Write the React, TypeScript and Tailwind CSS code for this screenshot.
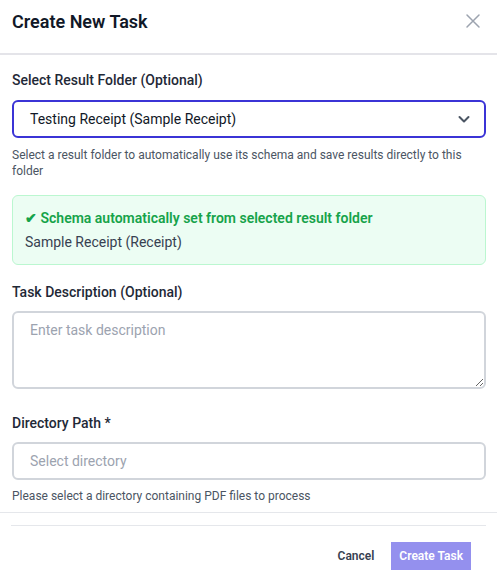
import React from "react";

export default function App() {
  return (
    <div className="w-[497px] h-[585px] bg-white overflow-hidden" style={{ fontFamily: "Roboto, 'Liberation Sans', sans-serif" }}>
      <div className="flex items-start justify-between px-3 pt-[10px] h-[55px] border-b-2 border-[#e4e4e9]">
        <h2 className="text-[18px] leading-6 font-semibold text-[#111827]">Create New Task</h2>
        <button className="mt-[1px] mr-[2px] text-[#9ca3af]">
          <svg width="20" height="20" viewBox="0 0 20 20" fill="none" stroke="currentColor" strokeWidth="1.5" strokeLinecap="round">
            <path d="M4 4l12 12M16 4L4 16" />
          </svg>
        </button>
      </div>
      <div className="pl-3 pr-[11px] pb-[8px] border-b border-[#e5e7eb]">
        <label className="block mt-[15px] text-[14px] leading-5 font-medium text-[#1f2937]">Select Result Folder (Optional)</label>
        <div className="mt-[10px] h-[38px] border-2 border-[#3b34d6] rounded-[6px] flex items-center justify-between pl-[16px] pr-[10px]">
          <span className="text-[14px] text-[#111827]">Testing Receipt (Sample Receipt)</span>
          <svg width="20" height="20" viewBox="0 0 20 20" fill="none" stroke="#4b5563" strokeWidth="2" strokeLinecap="round" strokeLinejoin="round">
            <path d="M5.5 8l4.5 4.5 4.5-4.5" />
          </svg>
        </div>
        <p className="mt-[9px] text-[12px] leading-4 text-[#4b5563]">Select a result folder to automatically use its schema and save results directly to this folder</p>
        <div className="mt-[16px] border border-[#bbf7d0] bg-[#ecfdf3] rounded-[6px] p-3 flex flex-col gap-1">
          <p className="text-[14px] leading-5 font-semibold text-[#16a34a]">✔ Schema automatically set from selected result folder</p>
          <p className="text-[14px] leading-5 text-[#374151]">Sample Receipt (Receipt)</p>
        </div>
        <label className="block mt-[17px] text-[14px] leading-5 font-medium text-[#1f2937]">Task Description (Optional)</label>
        <textarea
          className="mt-[9px] block w-full h-[78px] border-2 border-[#d1d5db] rounded-[6px] px-[16px] py-[7px] text-[14px] leading-5 placeholder:text-[#9ca3af] outline-none"
          placeholder="Enter task description"
        />
        <label className="block mt-[24px] text-[14px] leading-5 font-medium text-[#1f2937]">Directory Path *</label>
        <input
          className="mt-[9px] block w-full h-[38px] border-2 border-[#d1d5db] rounded-[6px] px-[16px] text-[14px] placeholder:text-[#9ca3af] outline-none"
          placeholder="Select directory"
        />
        <p className="mt-[8px] text-[12px] leading-4 text-[#4b5563]">Please select a directory containing PDF files to process</p>
      </div>
      <div className="px-[11px] pt-[12px]">
        <div className="border-t border-[#e5e7eb] flex justify-end items-center gap-[17px] pt-[16px] pr-[15px]">
          <button className="text-[12px] font-semibold text-[#374151]">Cancel</button>
          <button className="h-[28px] px-[8px] bg-[#9490ee] text-white text-[12px] font-semibold">Create Task</button>
        </div>
      </div>
    </div>
  );
}
